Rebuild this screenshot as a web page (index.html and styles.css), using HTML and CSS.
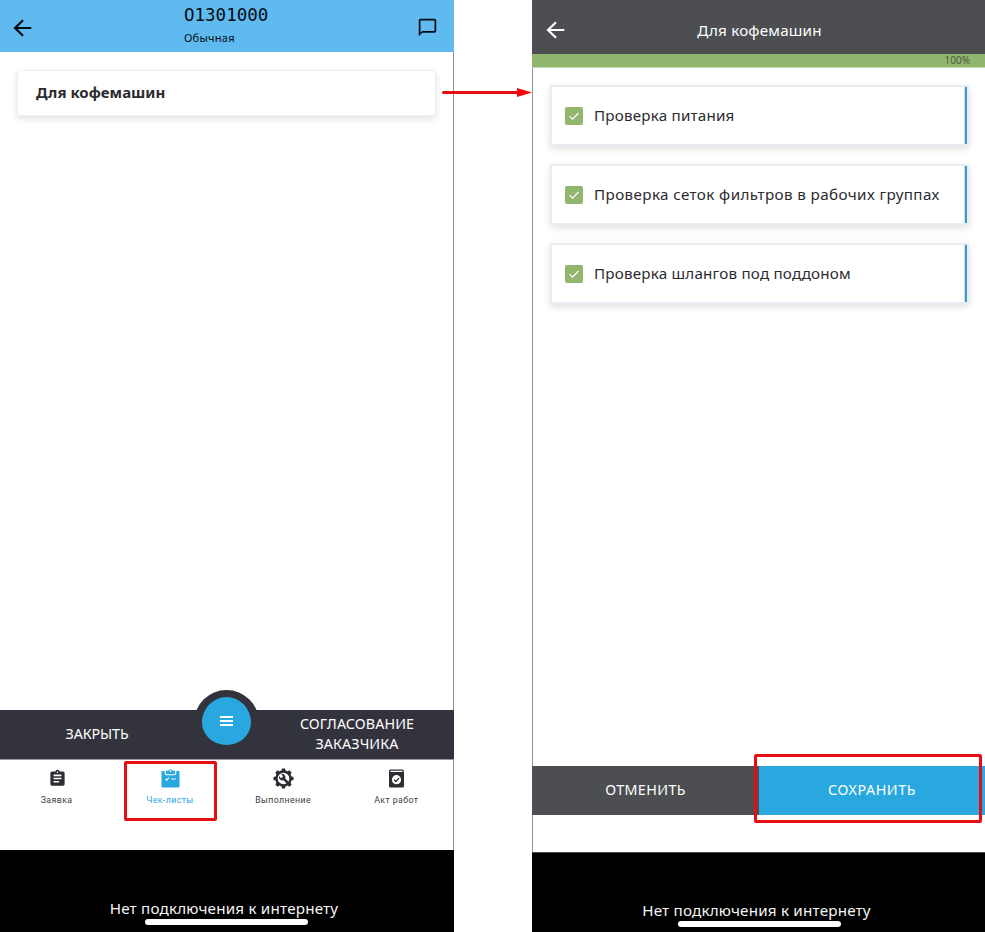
FILE: index.html
```html
<!DOCTYPE html>
<html lang="ru">
<head>
<meta charset="utf-8">
<title>Чек-листы</title>
<link rel="stylesheet" href="styles.css">
</head>
<body>
<main class="board">
  <section class="phone phone-left">
    <header class="top top-blue">
      <svg class="back" width="24" height="24" viewBox="0 0 24 24"><path d="M20.3 12H4.2M12 4.2 4 12l8 7.8" fill="none" stroke="currentColor" stroke-width="2.2"/></svg>
      <div class="order"><span class="order-id">О1301000</span><span class="order-kind">Обычная</span></div>
      <svg class="chat" width="21" height="21" viewBox="0 0 24 24"><path fill="currentColor" d="M20 2H4c-1.1 0-2 .9-2 2v18l4-4h14c1.1 0 2-.9 2-2V4c0-1.1-.9-2-2-2zm0 14H6l-2 2V4h16v12z"/></svg>
    </header>
    <div class="content">
      <div class="group"><span class="t-group">Для кофемашин</span></div>
    </div>
    <div class="actions">
      <div class="action"><span class="t-close">ЗАКРЫТЬ</span></div>
      <div class="action right"><span>СОГЛАСОВАНИЕ</span><span>ЗАКАЗЧИКА</span></div>
      <div class="fab"><i></i><i></i><i></i></div>
    </div>
    <nav class="tabs">
      <div class="tab">
        <svg width="19" height="19" viewBox="0 0 24 24"><path fill="currentColor" d="M19 3h-4.200a3 3 0 0 0-5.600 0H5a2 2 0 0 0-2 2v14a2 2 0 0 0 2 2h14a2 2 0 0 0 2-2V5a2 2 0 0 0-2-2zm-7 0a1 1 0 1 1 0 2 1 1 0 0 1 0-2zm2 14H7v-2h7zm3-4H7v-2h10zm0-4H7V7h10z"/></svg>
        <span>Заявка</span>
      </div>
      <div class="tab active">
        <svg width="19" height="19" viewBox="0 0 19 19"><path fill="currentColor" d="M1 2h2.700v2.500Q3.700 6.200 5.500 6.200h8Q15.300 6.200 15.300 4.500V2H18q.5 0 .5.500v15q0 1-1 1h-16q-1 0-1-1v-15Q.5 2 1 2z"/><path fill="currentColor" d="M4.800 1.800h2.500a2.300 2.300 0 0 1 4.400 0h2.500v2.200q0 1.200-1.200 1.200H6q-1.200 0-1.200-1.200z"/><circle cx="9.500" cy="2.100" r=".9" fill="#fff"/><path d="m4.500 10 1.200 1.200 2.300-2.700M10.300 10h4.600" fill="none" stroke="#fff" stroke-width="1.100"/></svg>
        <span>Чек-листы</span>
      </div>
      <div class="tab">
        <svg width="21" height="21" viewBox="-10.500 -10.500 21 21"><circle r="7" fill="none" stroke="currentColor" stroke-width="2.400"/><g fill="currentColor"><path id="tooth" d="M-2.200-7.300-1.500-10h3l.7 2.700z"/><use href="#tooth" transform="rotate(45)"/><use href="#tooth" transform="rotate(90)"/><use href="#tooth" transform="rotate(135)"/><use href="#tooth" transform="rotate(180)"/><use href="#tooth" transform="rotate(225)"/><use href="#tooth" transform="rotate(270)"/><use href="#tooth" transform="rotate(315)"/></g><path fill="currentColor" d="M-4.500-2.500-2.300-.3-.3-2.300-2.500-4.500A3.500 3.500 0 0 1 1.800 0L5.800 4 4 5.800 0 1.800A3.500 3.500 0 0 1-4.500-2.500z"/></svg>
        <span>Выполнение</span>
      </div>
      <div class="tab">
        <svg width="19" height="19" viewBox="0 0 19 19"><path fill="currentColor" fill-rule="evenodd" d="M3.500.5h12q1.300 0 1.300 1.500v1h.2v14q0 1.500-1.500 1.500h-12Q2 18.500 2 17V2Q2 .5 3.500.5zM3.500 1.800v1.100h12V1.800z"/><circle cx="9.500" cy="10.700" r="4.600" fill="#fff"/><path d="m7 10.700 1.900 1.800 3.200-3.400" fill="none" stroke="currentColor" stroke-width="1.300"/></svg>
        <span>Акт работ</span>
      </div>
      <div class="mark mark-tab"></div>
    </nav>
    <footer class="offline"><span>Нет подключения к интернету</span><b></b></footer>
  </section>

  <svg class="flow-arrow" width="92" height="12" viewBox="0 0 92 12"><path d="M2.500 5.500H78" stroke="#e80c10" stroke-width="3" stroke-linecap="round"/><path d="M76 1 91 5.500 76 10z" fill="#f50508"/></svg>

  <section class="phone phone-right">
    <header class="top top-dark">
      <svg class="back" width="24" height="24" viewBox="0 0 24 24"><path d="M20.300 12H4.200M12 4.200 4 12l8 7.800" fill="none" stroke="currentColor" stroke-width="2.200"/></svg>
      <span class="t-title">Для кофемашин</span>
    </header>
    <div class="progress"><span>100%</span></div>
    <div class="checks">
      <div class="check"><svg width="18" height="18" viewBox="0 0 18 18"><rect width="18" height="18" rx="2" fill="#91b66e"/><path d="m4.500 9.200 3 3 6-6.200" fill="none" stroke="#fff" stroke-width="1.200"/></svg><span>Проверка питания</span></div>
      <div class="check"><svg width="18" height="18" viewBox="0 0 18 18"><rect width="18" height="18" rx="2" fill="#91b66e"/><path d="m4.500 9.200 3 3 6-6.200" fill="none" stroke="#fff" stroke-width="1.200"/></svg><span class="wide">Проверка сеток фильтров в рабочих группах</span></div>
      <div class="check"><svg width="18" height="18" viewBox="0 0 18 18"><rect width="18" height="18" rx="2" fill="#91b66e"/><path d="m4.500 9.200 3 3 6-6.200" fill="none" stroke="#fff" stroke-width="1.200"/></svg><span>Проверка шлангов под поддоном</span></div>
    </div>
    <div class="buttons">
      <div class="cancel"><span>ОТМЕНИТЬ</span></div>
      <div class="save"><span>СОХРАНИТЬ</span></div>
      <div class="mark mark-save"></div>
    </div>
    <footer class="offline"><span>Нет подключения к интернету</span><b></b></footer>
  </section>
</main>
</body>
</html>
```
FILE: styles.css
```css
* { box-sizing: border-box; }
body {
  margin: 0;
  background: #fff;
  color: #2b2b2f;
  font-family: "Noto Sans", "Open Sans", sans-serif;
}
span { white-space: nowrap; }
svg { display: block; flex: none; }
.board {
  position: relative;
  display: flex;
  justify-content: space-between;
  width: 985px;
  height: 932px;
  overflow: hidden;
}
.phone { display: flex; flex-direction: column; height: 932px; }
.phone-left { width: 454px; border-right: 1px solid #929292; }
.phone-right { width: 453px; border-left: 1px solid #929292; }

.top { display: flex; flex: none; align-items: center; }
.top-blue { height: 52px; padding: 4px 16px 0 11px; background: #5fbbef; color: #050b12; margin-right: -1px; }
.order { display: flex; flex: 1; flex-direction: column; margin: -6px 0 0 149px; }
.order-id { font: 17.500px/20px "DejaVu Sans Mono", monospace; }
.order-kind { font-size: 11px; line-height: 16px; margin-top: 5px; letter-spacing: .25px; }
.chat { margin-top: -1px; }
.top-dark { height: 54px; margin-left: -1px; padding: 6px 0 0 12px; background: #4d4e52; color: #fff; }
.top-dark span { flex: 1; margin-right: 34px; text-align: center; font-size: 15.200px; line-height: 22px; letter-spacing: .2px; }

.content { flex: 1; padding: 18px 17px 0; }
.group {
  display: flex;
  align-items: center;
  height: 46px;
  padding: 0 0 2px 18px;
  border: 1px solid #edf0f4;
  border-radius: 4px;
  box-shadow: 0 3px 7px rgba(0, 0, 0, .12);
  font-size: 15px;
  font-weight: 700;
}
.actions {
  position: relative;
  display: flex;
  height: 50px;
  margin-right: -1px;
  padding-bottom: 2px;
  border-bottom: 1px solid #96969c;
  background: #33333d;
  color: #fff;
  font-size: 14.300px;
  line-height: 20px;
}
.action { display: flex; width: 194px; align-items: center; justify-content: center; letter-spacing: -.1px; }
.action.right { flex-direction: column; margin-left: 66px; letter-spacing: .1px; }
.fab {
  position: absolute;
  left: 194px;
  top: -20px;
  display: flex;
  flex-direction: column;
  align-items: center;
  gap: 2px;
  width: 65px;
  height: 65px;
  padding-top: 19px;
  border: 8px solid #33333d;
  border-top-width: 7px;
  border-bottom-width: 10px;
  border-radius: 50%;
  background: #29a8e0;
}
.fab i { width: 13px; height: 2px; background: #fff; }
.tabs { position: relative; display: flex; height: 90px; padding: 8px 0 0; }
.tab { display: flex; flex: 1; flex-direction: column; align-items: center; color: #2d2d33; }
.tab svg { height: 21px; margin-left: 1px; }
.tab span { margin-top: 4px; font: 8.800px/14px Roboto, sans-serif; letter-spacing: .4px; color: #404045; }
.tab.active, .tab.active span { color: #29a8e0; }
.mark { position: absolute; border: 3px solid #e40d12; border-radius: 2px; }
.mark-tab { left: 124px; top: 1px; width: 93px; height: 60px; }
.offline { display: flex; flex: none; flex-direction: column; align-items: center; background: #000; color: #f5f5f5; }
.offline span { font-size: 15.200px; line-height: 21px; letter-spacing: .2px; }
.offline b { width: 163px; height: 6px; border-radius: 3px; background: #fff; }
.phone-left .offline { height: 82px; padding: 48px 6px 0 0; margin-right: -1px; }
.phone-left .offline b { margin-left: 5px; }

.flow-arrow { position: absolute; left: 441px; top: 87px; z-index: 2; }

.progress { display: flex; flex: none; justify-content: flex-end; height: 14px; margin-left: -1px; padding-right: 15px; border-bottom: 1px solid #c3d6b0; background: #91b66e; }
.progress span { font-size: 10px; line-height: 13px; color: #4d5a42; }
.checks { display: flex; flex: 1; flex-direction: column; gap: 18px; padding: 17px 16px 0 17px; }
.check {
  position: relative;
  display: flex;
  align-items: center;
  gap: 11px;
  height: 61px;
  padding-left: 13px;
  border: 2px solid #e9eef4;
  box-shadow: 0 3px 7px rgba(0, 0, 0, .12);
  font-size: 15.200px;
  letter-spacing: .2px;
}
.check span { margin-top: -1px; }
.check .wide { letter-spacing: .39px; }
.check::after { content: ""; position: absolute; right: 0; top: 0; bottom: 0; width: 2px; border-left: 1px solid #c8e0ec; background: #3a9cc6; }
.buttons { position: relative; display: flex; flex: none; height: 49px; margin: 0 0 37px -1px; color: #fff; font-size: 14.300px; letter-spacing: .4px; }
.cancel, .save { display: flex; align-items: center; justify-content: center; padding-bottom: 2px; }
.cancel { width: 227px; background: #4d4e52; }
.save { flex: 1; background: #29a8e0; letter-spacing: .55px; }
.mark-save { left: 222px; top: -12px; width: 228px; height: 69px; }
.phone-right .offline { height: 80px; margin-left: -1px; padding: 47px 4px 0 0; border-top: 1px solid #444; }
.phone-right .offline b { margin-left: 5px; }
```
